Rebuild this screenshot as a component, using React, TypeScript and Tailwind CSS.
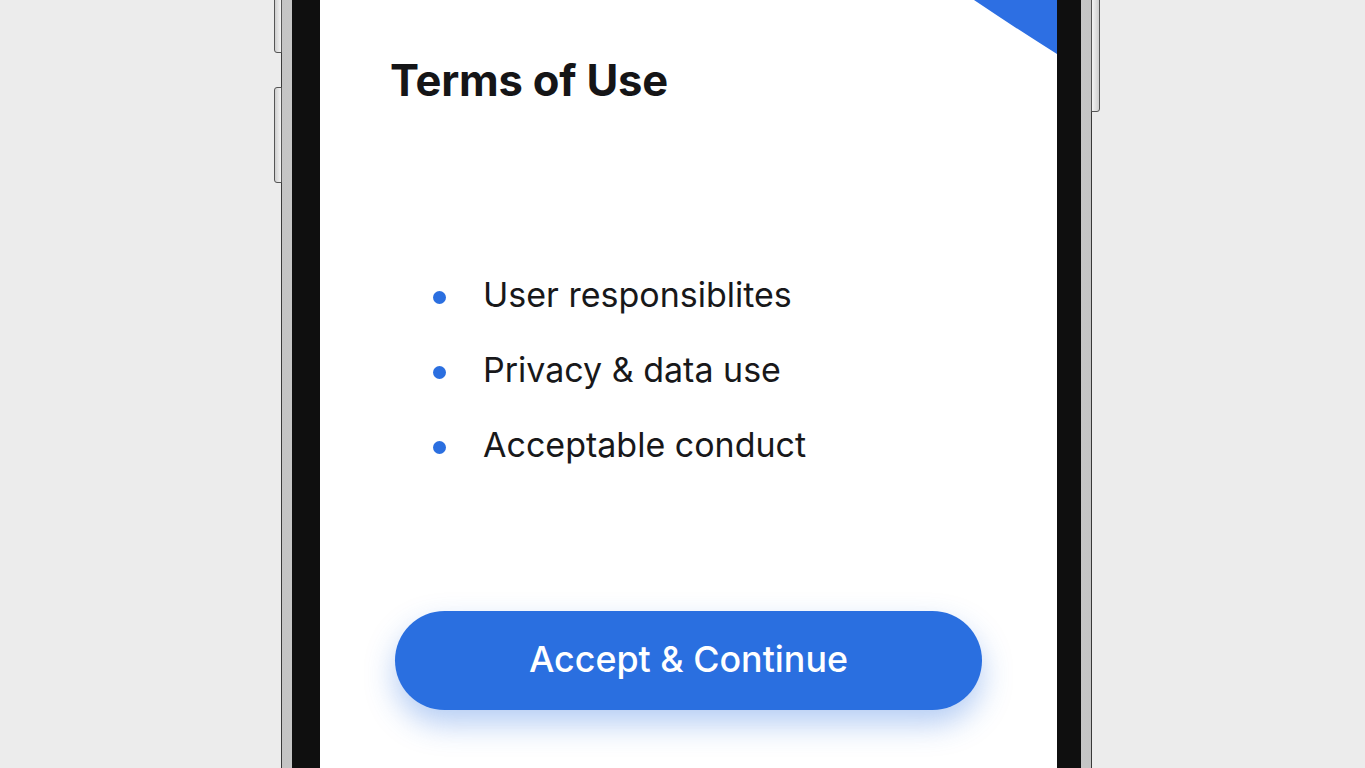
const items = ["User responsiblites", "Privacy & data use", "Acceptable conduct"];

function Bullet({ label }: { label: string }) {
  return (
    <li className="flex items-center h-[34px]">
      <span className="w-[13px] h-[13px] shrink-0 rounded-full bg-[#2b6fe0] mt-[6px]" />
      <span className="ml-[37px] text-[34px] leading-none text-[#18181a]">{label}</span>
    </li>
  );
}

export default function App() {
  return (
    <div className="h-screen w-full overflow-hidden bg-[#ececec] flex justify-center" style={{ fontFamily: "Inter, 'Noto Sans', sans-serif" }}>
      <div className="relative -mt-[80px] ml-[8px] h-[920px] w-[811px] shrink-0">
        {/* side buttons */}
        <div className="absolute left-[-7px] top-[61px] w-[8px] h-[72px] rounded-l-[3px] border border-[#555] bg-gradient-to-r from-[#cfcfcf] to-[#f4f4f4]" />
        <div className="absolute left-[-7px] top-[167px] w-[8px] h-[96px] rounded-l-[3px] border border-[#555] bg-gradient-to-r from-[#cfcfcf] to-[#f4f4f4]" />
        <div className="absolute right-[-8px] top-[61px] w-[9px] h-[131px] rounded-r-[3px] border border-[#555] bg-gradient-to-l from-[#cfcfcf] to-[#f4f4f4]" />

        <div className="h-full w-full rounded-[60px] border border-[#3a3a3a] bg-gradient-to-r from-[#c4c4c4] via-[#f5f5f5] to-[#c4c4c4] p-[10px]">
          <div className="h-full w-full rounded-[52px] bg-[#0f0f0f] pl-[28px] pr-[24px] py-[28px]">
            <div className="relative h-full w-full overflow-hidden rounded-[32px] bg-white pl-[70px] pr-[72px] pt-[100px]">
              <svg className="absolute right-0 top-0" width="100" height="98" viewBox="0 0 100 98">
                <path d="M0 0 L 0 30 Q 8 38 17 41 Q 60 70 100 95 L 100 0 Z" fill="#2d6fe3" />
              </svg>

              <h1 className="text-[43.5px] leading-none font-bold text-[#151517] tracking-[-0.2px]">Terms of Use</h1>

              <ul className="mt-[175px] ml-[43px] flex flex-col gap-[41px]">
                {items.map((t) => (
                  <Bullet key={t} label={t} />
                ))}
              </ul>

              <button className="mt-[149px] ml-[5px] flex h-[99px] w-[587px] items-center justify-center rounded-full bg-[#2a6fe0] text-[35.8px] font-medium text-white shadow-[0_14px_30px_rgba(42,111,224,0.35)]">
                Accept &amp; Continue
              </button>
            </div>
          </div>
        </div>
      </div>
    </div>
  );
}
